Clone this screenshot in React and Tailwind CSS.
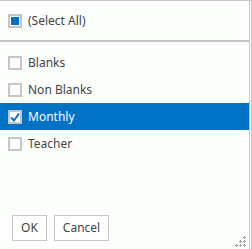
const items = [
  { label: 'Blanks', checked: false },
  { label: 'Non Blanks', checked: false },
  { label: 'Monthly', checked: true },
  { label: 'Teacher', checked: false },
];

function Box({ state }) {
  return (
    <span className="w-[14px] h-[14px] border-2 border-[#c6c6c6] bg-white flex items-center justify-center shrink-0">
      {state === 'some' && <span className="w-[8px] h-[8px] bg-[#0072c6]" />}
      {state === 'on' && (
        <svg width="10" height="10" viewBox="0 0 10 10">
          <path d="M1 5.5 L4 8.5 L9 1.5" fill="none" stroke="#0072c6" strokeWidth="2" />
        </svg>
      )}
    </span>
  );
}

// grip: plus signs on a 4px grid
const grip = [[10, 2], [6, 6], [10, 6], [2, 10], [6, 10], [10, 10]];

export default function App() {
  return (
    <div
      className="relative w-[252px] h-[249px] bg-[#fcfefc] border-t border-[#c6c6c6] flex text-[12px] text-[#444]"
      style={{ fontFamily: '"Segoe UI", "Noto Sans", sans-serif' }}
    >
      <div className="flex-1 flex flex-col border-r border-[#c6c6c6]">
        <div className="h-[41px] flex items-center gap-[6px] pl-[8px] border-b-2 border-[#c6c6c6]">
          <Box state="some" />
          <span>(Select All)</span>
        </div>
        <div className="pt-[7px] flex flex-col">
          {items.map((it) => (
            <div
              key={it.label}
              className={`h-[27px] flex items-center gap-[6px] pl-[8px] ${it.checked ? 'bg-[#0072c6] text-white' : ''}`}
            >
              <Box state={it.checked ? 'on' : 'off'} />
              <span>{it.label}</span>
            </div>
          ))}
        </div>
        <div className="mt-auto mb-[8px] flex gap-[7px] pl-[12px]">
          <button className="w-[35px] h-[26px] border border-[#c6c6c6] bg-white">OK</button>
          <button className="w-[55px] h-[26px] border border-[#c6c6c6] bg-white">Cancel</button>
        </div>
      </div>
      <div className="w-[2px] border-r border-[#c6c6c6]" />
      <svg className="absolute left-[234px] top-[234px]" width="12" height="12" viewBox="0 0 12 12" fill="#a0a0a0">
        {grip.map(([cx, cy]) => (
          <g key={`${cx}-${cy}`}>
            <rect x={cx - 1} y={cy} width="3" height="1" />
            <rect x={cx} y={cy - 1} width="1" height="3" />
          </g>
        ))}
      </svg>
    </div>
  );
}
